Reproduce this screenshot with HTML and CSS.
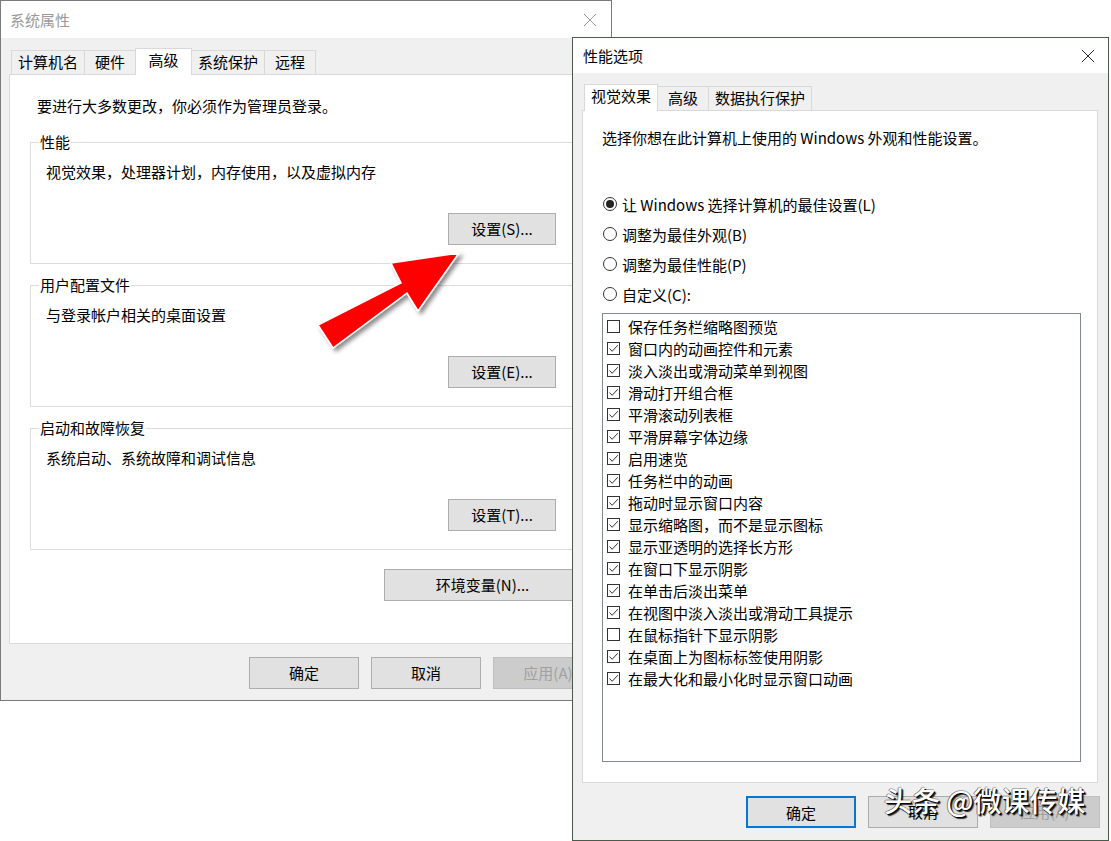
FILE: index.html
```html
<!DOCTYPE html>
<html lang="zh-CN">
<head>
  <meta charset="UTF-8" />
  <meta name="viewport" content="width=device-width, initial-scale=1.0" />
  <title>系统属性 - 性能选项</title>
  <link rel="stylesheet" href="styles.css">
</head>
<body>
  <div class="desktop">

    <!-- 系统属性 (inactive, behind) -->
    <div class="window sysprops">
      <div class="titlebar inactive">
        <span class="title">系统属性</span>
        <svg class="close" viewBox="0 0 14 14"><path d="M1 1L13 13M13 1L1 13"/></svg>
      </div>
      <div class="frame">
        <div class="tabs">
          <span class="tab">计算机名</span>
          <span class="tab">硬件</span>
          <span class="tab active">高级</span>
          <span class="tab">系统保护</span>
          <span class="tab">远程</span>
        </div>
        <div class="panel advanced">
          <p class="note">要进行大多数更改，你必须作为管理员登录。</p>

          <fieldset class="group">
            <legend>性能</legend>
            <p>视觉效果，处理器计划，内存使用，以及虚拟内存</p>
            <div class="group-actions"><button class="btn small">设置(S)...</button></div>
          </fieldset>

          <fieldset class="group">
            <legend>用户配置文件</legend>
            <p>与登录帐户相关的桌面设置</p>
            <div class="group-actions"><button class="btn small">设置(E)...</button></div>
          </fieldset>

          <fieldset class="group">
            <legend>启动和故障恢复</legend>
            <p>系统启动、系统故障和调试信息</p>
            <div class="group-actions"><button class="btn small">设置(T)...</button></div>
          </fieldset>

          <div class="env"><button class="btn wide">环境变量(N)...</button></div>
        </div>
        <div class="actions">
          <button class="btn">确定</button>
          <button class="btn">取消</button>
          <button class="btn" disabled>应用(A)</button>
        </div>
      </div>
    </div>

    <!-- callout arrow pointing at 设置(S) -->
    <svg class="arrow" viewBox="0 0 200 140" width="200" height="140">
      <defs>
        <filter id="shade" x="-20%" y="-20%" width="150%" height="150%">
          <feDropShadow dx="3" dy="3" stdDeviation="2" flood-color="#000" flood-opacity="0.45"/>
        </filter>
      </defs>
      <polygon points="159,33 91,43 101,63 18,105 33,128 107,73 118,91" fill="#ff0000" stroke="#fff" stroke-width="1.5" filter="url(#shade)"/>
    </svg>

    <!-- 性能选项 (active) -->
    <div class="window perfopts">
      <div class="titlebar">
        <span class="title">性能选项</span>
        <svg class="close" viewBox="0 0 14 14"><path d="M1 1L13 13M13 1L1 13"/></svg>
      </div>
      <div class="frame">
        <div class="tabs">
          <span class="tab active">视觉效果</span>
          <span class="tab">高级</span>
          <span class="tab">数据执行保护</span>
        </div>
        <div class="panel visual">
          <p class="lead">选择你想在此计算机上使用的 Windows 外观和性能设置。</p>

          <div class="choices">
            <label class="choice"><span class="radio on"></span>让 Windows 选择计算机的最佳设置(L)</label>
            <label class="choice"><span class="radio"></span>调整为最佳外观(B)</label>
            <label class="choice"><span class="radio"></span>调整为最佳性能(P)</label>
            <label class="choice"><span class="radio"></span>自定义(C):</label>
          </div>

          <div class="list" id="effects"></div>
        </div>
        <div class="actions">
          <button class="btn default">确定</button>
          <button class="btn">取消</button>
          <button class="btn" disabled>应用(A)</button>
        </div>
      </div>
    </div>

    <div class="watermark">头条 @微课传媒</div>
  </div>

  <script>
    const effects = [
      ["保存任务栏缩略图预览", false],
      ["窗口内的动画控件和元素", true],
      ["淡入淡出或滑动菜单到视图", true],
      ["滑动打开组合框", true],
      ["平滑滚动列表框", true],
      ["平滑屏幕字体边缘", true],
      ["启用速览", true],
      ["任务栏中的动画", true],
      ["拖动时显示窗口内容", true],
      ["显示缩略图，而不是显示图标", true],
      ["显示亚透明的选择长方形", true],
      ["在窗口下显示阴影", true],
      ["在单击后淡出菜单", true],
      ["在视图中淡入淡出或滑动工具提示", true],
      ["在鼠标指针下显示阴影", false],
      ["在桌面上为图标标签使用阴影", true],
      ["在最大化和最小化时显示窗口动画", true]
    ];

    const list = document.getElementById("effects");
    const tick = '<svg viewBox="0 0 11 11"><path d="M1.5 5.5L4.2 8.3L9.8 2.2"/></svg>';

    effects.forEach(([label, on]) => {
      const row = document.createElement("div");
      row.className = "item";
      row.innerHTML = `<span class="check">${on ? tick : ""}</span><span>${label}</span>`;
      list.appendChild(row);
    });
  </script>
</body>
</html>
```

FILE: styles.css
```css
* {
  box-sizing: border-box;
}
body {
  margin: 0;
  font-family: "Noto Sans CJK SC", "Microsoft YaHei", sans-serif;
  font-size: 15px;
  color: #000;
  background: #fff;
}
.desktop {
  position: relative;
  width: 1111px;
  height: 841px;
  overflow: hidden;
  background: #fff;
}

/* windows */
.window {
  position: absolute;
  display: flex;
  flex-direction: column;
  background: #f0f0f0;
}
.sysprops {
  left: 0;
  top: 0;
  width: 612px;
  height: 701px;
  border: 1px solid #7a7a7a;
}
.perfopts {
  left: 572px;
  top: 37px;
  width: 537px;
  height: 804px;
  border: 1px solid #4b5a4b;
}
.titlebar {
  display: flex;
  align-items: center;
  justify-content: space-between;
  background: #fff;
  flex: none;
}
.sysprops .titlebar {
  height: 37px;
  padding: 0 14px 0 9px;
}
.perfopts .titlebar {
  height: 35px;
  padding: 0 13px 0 10px;
}
.title {
  line-height: 20px;
}
.inactive .title {
  color: #9a9a9a;
}
.close {
  width: 14px;
  height: 14px;
  fill: none;
  stroke: #222;
  stroke-width: 1;
}
.inactive .close {
  stroke: #999;
}
.frame {
  flex: 1;
  display: flex;
  flex-direction: column;
}
.sysprops .frame {
  padding: 10px 9px 11px 8px;
}
.perfopts .frame {
  padding: 11px 10px 11px 9px;
}

/* tabs */
.tabs {
  display: flex;
  align-items: flex-end;
  height: 26px;
  margin-left: 2px;
  position: relative;
  z-index: 1;
  flex: none;
}
.tab {
  height: 24px;
  min-width: 52px;
  padding: 0 6px;
  line-height: 22px;
  text-align: center;
  border: 1px solid #d9d9d9;
  border-bottom: none;
  background: #f0f0f0;
  margin-left: -1px;
  white-space: nowrap;
}
.tab:first-child {
  margin-left: 0;
}
.tab.active {
  height: 27px;
  min-width: 57px;
  margin-bottom: -1px;
  background: #fff;
  line-height: 21px;
}
.panel {
  background: #fff;
  border: 1px solid #d9d9d9;
  flex: none;
}

/* 高级 tab */
.advanced {
  height: 570px;
  padding: 20px 20px 0;
}
.note {
  margin: 0 0 0 7px;
  line-height: 22px;
}
.group {
  margin: 14px 0 0;
  padding: 0 24px 18px 15px;
  border: 1px solid #dcdcdc;
  min-width: 0;
}
.group + .group {
  margin-top: 10px;
}
.group legend {
  padding: 0 1px;
  margin-left: -7px;
  line-height: 22px;
}
.group p {
  margin: 8px 0 0;
  line-height: 22px;
}
.group-actions {
  display: flex;
  justify-content: flex-end;
  margin-top: 30px;
}
.env {
  display: flex;
  justify-content: flex-end;
  margin-top: 19px;
}

/* buttons */
.btn {
  font: inherit;
  width: 110px;
  height: 32px;
  padding: 0;
  line-height: 30px;
  color: #000;
  background: #e1e1e1;
  border: 1px solid #adadad;
}
.btn.small {
  width: 108px;
}
.btn.wide {
  width: 197px;
}
.btn.default {
  border: 2px solid #0078d7;
}
.btn:disabled {
  background: #cccccc;
  border-color: #bfbfbf;
  color: #a0a0a0;
}
.actions {
  display: flex;
  justify-content: flex-end;
  gap: 12px;
  margin-top: 13px;
}
.sysprops .actions {
  margin-right: -1px;
}
.perfopts .actions {
  margin-right: -2px;
}

/* 视觉效果 tab */
.visual {
  height: 673px;
  padding: 16px 16px 20px 19px;
  display: flex;
  flex-direction: column;
}
.lead {
  margin: 0;
  line-height: 22px;
}
.choices {
  margin-top: 40px;
}
.choice {
  display: flex;
  align-items: center;
  gap: 5px;
  height: 30px;
  padding-left: 1px;
}
.radio {
  position: relative;
  width: 14px;
  height: 14px;
  border: 1px solid #333;
  border-radius: 50%;
  background: #fff;
}
.radio.on::after {
  content: "";
  position: absolute;
  left: 2px;
  top: 2px;
  width: 8px;
  height: 8px;
  border-radius: 50%;
  background: #222;
}
.list {
  margin-top: 4px;
  height: 449px;
  padding: 1px 0;
  border: 1px solid #828790;
  background: #fff;
}
.item {
  display: flex;
  align-items: center;
  gap: 8px;
  height: 22px;
  padding-left: 4px;
  white-space: nowrap;
}
.check {
  width: 13px;
  height: 13px;
  border: 1px solid #333;
  background: #fff;
  display: flex;
}
.check svg {
  width: 11px;
  height: 11px;
  fill: none;
  stroke: #333;
  stroke-width: 1;
}

/* overlays */
.arrow {
  position: absolute;
  left: 300px;
  top: 220px;
}
.watermark {
  position: absolute;
  left: 884px;
  top: 780px;
  font-size: 28px;
  line-height: 40px;
  font-weight: 500;
  color: #fff;
  white-space: nowrap;
  text-shadow: 1px 1px 0 #000, 2px 2px 1px rgba(0, 0, 0, 0.8), -1px 0 0 rgba(0, 0, 0, 0.45), 0 -1px 0 rgba(0, 0, 0, 0.3);
}
```
